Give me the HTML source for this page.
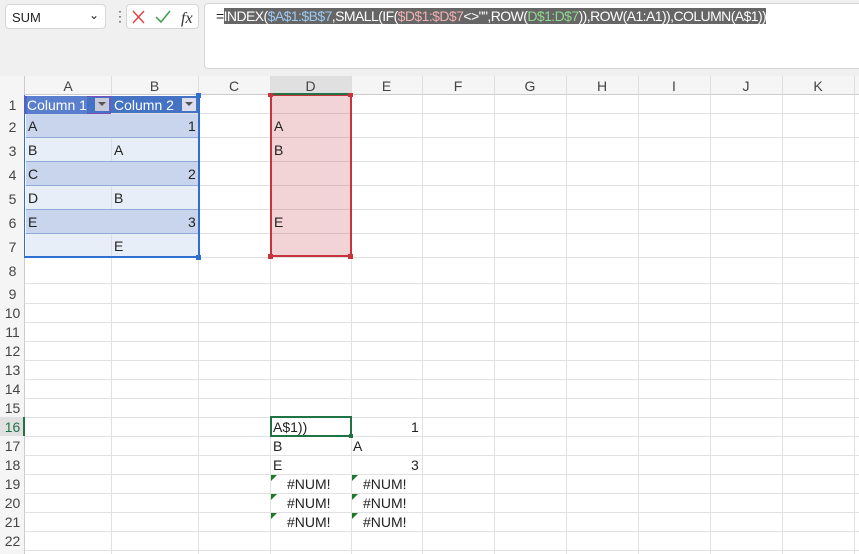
<!DOCTYPE html>
<html><head><meta charset="utf-8"><style>
*{margin:0;padding:0;box-sizing:border-box}
body{width:859px;height:554px;overflow:hidden;background:#fff;font-family:"Liberation Sans",sans-serif;position:relative}
.a{position:absolute}
.top{left:0;top:0;width:859px;height:76px;background:#f0f0f0}
.nb{left:5px;top:4px;width:101px;height:25px;background:#fff;border:1px solid #d6d6d6;border-radius:4px;font-size:13px;padding:5px 0 0 6px;color:#222}
.fxb{left:126px;top:4px;width:73px;height:25px;background:#fff;border:1px solid #d6d6d6;border-radius:4px}
.fb{left:204px;top:3px;width:660px;height:66px;background:#fff;border:1px solid #d6d6d6;border-radius:4px}
.hl{background:#e1e1e1;height:1px;left:25px;width:834px}
.vl{background:#e1e1e1;width:1px;top:95px;height:459px}
.ch{top:76px;height:19px;font-size:14px;color:#444;text-align:center;line-height:20px}
.rh{left:0;width:25px;font-size:14px;color:#444;text-align:center}
.t{font-size:14px;color:#222;line-height:24px}
</style></head><body>
<div class="a top"></div>
<div class="a nb">SUM<span style="position:absolute;right:6px;top:3px;font-size:12px">&#8964;</span></div>
<div class="a" style="left:113px;top:8px;font-size:14px;color:#555">&#8942;</div>
<div class="a fxb">
<svg width="73" height="25" style="position:absolute;left:0;top:0"><path d="M6 6l11 12M17 6L6 18" stroke="#e04848" stroke-width="1.5" fill="none"/><path d="M29 12l5 5 9-11" stroke="#3aa04a" stroke-width="1.5" fill="none"/><text x="54" y="18" font-family="Liberation Serif" font-style="italic" font-size="16" fill="#333">fx</text></svg>
</div>
<div class="a fb"></div>
<div class="a" style="left:216px;top:8px;font-size:14px;color:#222;white-space:nowrap;letter-spacing:-0.57px">=<span style="background:#666;color:#fff"><span>INDEX(</span><span style="color:#9cc9f2">$A$1:$B$7</span>,SMALL(IF(<span style="color:#f0b0b0">$D$1:$D$7</span>&lt;&gt;"",ROW(<span style="color:#8fd88f">D$1:D$7</span>)),ROW(A1:A1)),COLUMN(A$1))</span></div>

<div class="a" style="left:0;top:76px;width:859px;height:19px;background:#f5f5f5;border-bottom:1px solid #ccc"></div>
<div class="a" style="left:0;top:76px;width:25px;height:478px;background:#f5f5f5;border-right:1px solid #ccc"></div>
<div class="a" style="left:270px;top:76px;width:81px;height:19px;background:#e0e0e0;border-bottom:2px solid #217346"></div>
<div class="a" style="left:0;top:417px;width:25px;height:19px;background:#e0e0e0;border-right:2px solid #217346"></div>

<div class="a ch" style="left:25px;width:86px">A</div>
<div class="a ch" style="left:111px;width:87px">B</div>
<div class="a ch" style="left:198px;width:72px">C</div>
<div class="a ch" style="left:270px;width:81px">D</div>
<div class="a ch" style="left:351px;width:71px">E</div>
<div class="a ch" style="left:422px;width:72px">F</div>
<div class="a ch" style="left:494px;width:72px">G</div>
<div class="a ch" style="left:566px;width:72px">H</div>
<div class="a ch" style="left:638px;width:72px">I</div>
<div class="a ch" style="left:710px;width:72px">J</div>
<div class="a ch" style="left:782px;width:72px">K</div>
<div class="a" style="left:111px;top:76px;width:1px;height:19px;background:#ddd"></div>
<div class="a" style="left:198px;top:76px;width:1px;height:19px;background:#ddd"></div>
<div class="a" style="left:270px;top:76px;width:1px;height:19px;background:#ddd"></div>
<div class="a" style="left:351px;top:76px;width:1px;height:19px;background:#ddd"></div>
<div class="a" style="left:422px;top:76px;width:1px;height:19px;background:#ddd"></div>
<div class="a" style="left:494px;top:76px;width:1px;height:19px;background:#ddd"></div>
<div class="a" style="left:566px;top:76px;width:1px;height:19px;background:#ddd"></div>
<div class="a" style="left:638px;top:76px;width:1px;height:19px;background:#ddd"></div>
<div class="a" style="left:710px;top:76px;width:1px;height:19px;background:#ddd"></div>
<div class="a" style="left:782px;top:76px;width:1px;height:19px;background:#ddd"></div>
<div class="a" style="left:854px;top:76px;width:1px;height:19px;background:#ddd"></div>

<div class="a vl" style="left:111px"></div><div class="a vl" style="left:198px"></div><div class="a vl" style="left:270px"></div><div class="a vl" style="left:351px"></div><div class="a vl" style="left:422px"></div><div class="a vl" style="left:494px"></div><div class="a vl" style="left:566px"></div><div class="a vl" style="left:638px"></div><div class="a vl" style="left:710px"></div><div class="a vl" style="left:782px"></div><div class="a vl" style="left:854px"></div>
<div class="a hl" style="top:113px"></div><div class="a hl" style="top:137px"></div><div class="a hl" style="top:161px"></div><div class="a hl" style="top:185px"></div><div class="a hl" style="top:209px"></div><div class="a hl" style="top:233px"></div><div class="a hl" style="top:257px"></div><div class="a hl" style="top:283px"></div><div class="a hl" style="top:303px"></div><div class="a hl" style="top:322px"></div><div class="a hl" style="top:341px"></div><div class="a hl" style="top:360px"></div><div class="a hl" style="top:379px"></div><div class="a hl" style="top:398px"></div><div class="a hl" style="top:417px"></div><div class="a hl" style="top:436px"></div><div class="a hl" style="top:455px"></div><div class="a hl" style="top:474px"></div><div class="a hl" style="top:493px"></div><div class="a hl" style="top:512px"></div><div class="a hl" style="top:531px"></div><div class="a hl" style="top:550px"></div>

<div class="a rh" style="top:97px">1</div><div class="a rh" style="top:119px">2</div><div class="a rh" style="top:143px">3</div><div class="a rh" style="top:167px">4</div><div class="a rh" style="top:191px">5</div><div class="a rh" style="top:215px">6</div><div class="a rh" style="top:239px">7</div><div class="a rh" style="top:263px">8</div><div class="a rh" style="top:286px">9</div><div class="a rh" style="top:305px">10</div><div class="a rh" style="top:324px">11</div><div class="a rh" style="top:343px">12</div><div class="a rh" style="top:362px">13</div><div class="a rh" style="top:381px">14</div><div class="a rh" style="top:400px">15</div><div class="a rh" style="top:419px;color:#217346">16</div><div class="a rh" style="top:438px">17</div><div class="a rh" style="top:457px">18</div><div class="a rh" style="top:476px">19</div><div class="a rh" style="top:495px">20</div><div class="a rh" style="top:514px">21</div><div class="a rh" style="top:533px">22</div>

<div class="a" style="left:26px;top:96px;width:172px;height:17px;background:#4472c4"></div>
<div class="a" style="left:26px;top:114px;width:172px;height:23px;background:#c9d5ec"></div>
<div class="a" style="left:26px;top:138px;width:172px;height:23px;background:#e8eef8"></div>
<div class="a" style="left:26px;top:162px;width:172px;height:23px;background:#c9d5ec"></div>
<div class="a" style="left:26px;top:186px;width:172px;height:23px;background:#e8eef8"></div>
<div class="a" style="left:26px;top:210px;width:172px;height:23px;background:#c9d5ec"></div>
<div class="a" style="left:26px;top:234px;width:172px;height:23px;background:#e8eef8"></div>
<div class="a" style="left:26px;top:137px;width:172px;height:1px;background:#8eaadb"></div>
<div class="a" style="left:26px;top:161px;width:172px;height:1px;background:#8eaadb"></div>
<div class="a" style="left:26px;top:185px;width:172px;height:1px;background:#8eaadb"></div>
<div class="a" style="left:26px;top:209px;width:172px;height:1px;background:#8eaadb"></div>
<div class="a" style="left:26px;top:233px;width:172px;height:1px;background:#8eaadb"></div>
<div class="a" style="left:111px;top:138px;width:1px;height:23px;background:#d8e0ee"></div>
<div class="a" style="left:111px;top:186px;width:1px;height:23px;background:#d8e0ee"></div>
<div class="a" style="left:111px;top:234px;width:1px;height:23px;background:#d8e0ee"></div>
<div class="a" style="left:25px;top:96px;width:86px;height:18px;border:1px solid #7b4fb5"></div>
<div class="a" style="left:95px;top:98px;width:14px;height:13px;background:#c8c8d8"></div>
<div class="a" style="left:182px;top:98px;width:14px;height:13px;background:#dde"></div>
<div class="a" style="left:98px;top:102px;border-left:4px solid transparent;border-right:4px solid transparent;border-top:4px solid #555"></div>
<div class="a" style="left:185px;top:102px;border-left:4px solid transparent;border-right:4px solid transparent;border-top:4px solid #555"></div>
<div class="a" style="left:27px;top:96px;font-size:14px;color:#fff;background:#5b7fcf;line-height:18px">Column 1</div>
<div class="a" style="left:114px;top:96px;font-size:14px;color:#fff;line-height:18px">Column 2</div>
<div class="a" style="left:24px;top:95px;width:176px;height:163px;border:2px solid #2f6fd0;border-left-width:1px;border-top:none"></div>
<div class="a" style="left:196px;top:255px;width:5px;height:5px;background:#2f6fd0"></div>
<div class="a" style="left:196px;top:93px;width:5px;height:5px;background:#2f6fd0"></div>

<div class="a t" style="left:28px;top:114px">A</div><div class="a t" style="left:188px;top:114px">1</div>
<div class="a t" style="left:28px;top:138px">B</div><div class="a t" style="left:114px;top:138px">A</div>
<div class="a t" style="left:28px;top:162px">C</div><div class="a t" style="left:188px;top:162px">2</div>
<div class="a t" style="left:28px;top:186px">D</div><div class="a t" style="left:114px;top:186px">B</div>
<div class="a t" style="left:28px;top:210px">E</div><div class="a t" style="left:188px;top:210px">3</div>
<div class="a t" style="left:114px;top:234px">E</div>

<div class="a" style="left:270px;top:95px;width:82px;height:162px;background:#f2d4d6;border:2px solid #c8343e;border-top-width:1px"></div>
<div class="a" style="left:272px;top:113px;width:78px;height:1px;background:#dbb"></div>
<div class="a" style="left:272px;top:137px;width:78px;height:1px;background:#dbb"></div>
<div class="a" style="left:272px;top:161px;width:78px;height:1px;background:#dbb"></div>
<div class="a" style="left:272px;top:185px;width:78px;height:1px;background:#dbb"></div>
<div class="a" style="left:272px;top:209px;width:78px;height:1px;background:#dbb"></div>
<div class="a" style="left:272px;top:233px;width:78px;height:1px;background:#dbb"></div>
<div class="a" style="left:268px;top:254px;width:5px;height:5px;background:#c8343e"></div>
<div class="a" style="left:348px;top:254px;width:5px;height:5px;background:#c8343e"></div>
<div class="a" style="left:268px;top:93px;width:5px;height:4px;background:#c8343e"></div>
<div class="a" style="left:348px;top:93px;width:5px;height:4px;background:#c8343e"></div>
<div class="a t" style="left:274px;top:114px">A</div>
<div class="a t" style="left:274px;top:138px">B</div>
<div class="a t" style="left:274px;top:210px">E</div>

<div class="a" style="left:270px;top:416px;width:82px;height:21px;border:2px solid #217346"></div>
<div class="a" style="left:349px;top:434px;width:4px;height:4px;background:#217346"></div>
<div class="a t" style="left:273px;top:415px">A$1))</div><div class="a t" style="left:411px;top:415px">1</div>
<div class="a t" style="left:273px;top:434px">B</div><div class="a t" style="left:353px;top:434px">A</div>
<div class="a t" style="left:273px;top:453px">E</div><div class="a t" style="left:411px;top:453px">3</div>
<div class="a t" style="left:287px;top:472px">#NUM!</div><div class="a t" style="left:363px;top:472px">#NUM!</div>
<div class="a t" style="left:287px;top:491px">#NUM!</div><div class="a t" style="left:363px;top:491px">#NUM!</div>
<div class="a t" style="left:287px;top:510px">#NUM!</div><div class="a t" style="left:363px;top:510px">#NUM!</div>
<div class="a" style="left:271px;top:475px;border-top:6px solid #1a7a2a;border-right:6px solid transparent"></div>
<div class="a" style="left:352px;top:475px;border-top:6px solid #1a7a2a;border-right:6px solid transparent"></div>
<div class="a" style="left:271px;top:494px;border-top:6px solid #1a7a2a;border-right:6px solid transparent"></div>
<div class="a" style="left:352px;top:494px;border-top:6px solid #1a7a2a;border-right:6px solid transparent"></div>
<div class="a" style="left:271px;top:513px;border-top:6px solid #1a7a2a;border-right:6px solid transparent"></div>
<div class="a" style="left:352px;top:513px;border-top:6px solid #1a7a2a;border-right:6px solid transparent"></div>
</body></html>
